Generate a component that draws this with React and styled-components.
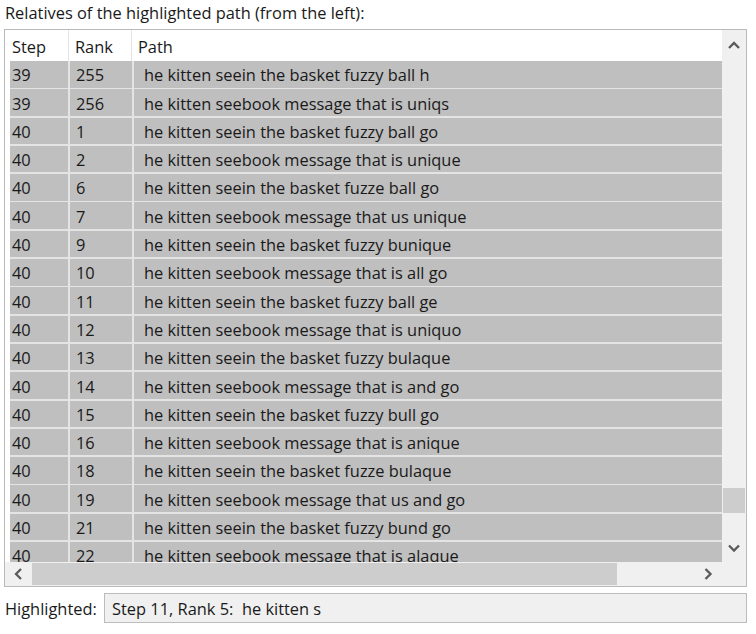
import React from "react";
import styled, { createGlobalStyle } from "styled-components";

const GlobalStyle = createGlobalStyle`
  html, body { margin: 0; padding: 0; background: #ffffff; }
  body { font-family: "Open Sans", "Noto Sans", "Liberation Sans", sans-serif; color: #1a1a1a; }
`;

const Window = styled.div`
  width: 756px;
  height: 634px;
  box-sizing: border-box;
  padding: 0 9px 0 4px;
  display: flex;
  flex-direction: column;
  font-size: 16.4px;
`;

const Title = styled.div`
  height: 29px;
  box-sizing: border-box;
  padding: 3px 0 0 1px;
  line-height: 20px;
`;

const Frame = styled.div`
  height: 558px;
  box-sizing: border-box;
  border: 1px solid #b9b9b9;
  display: grid;
  grid-template-columns: 1fr 24px;
  grid-template-rows: 1fr 24px;
`;

const Viewport = styled.div`
  overflow: hidden;
  background: #ffffff;
`;

const Header = styled.div`
  height: 31px;
  display: grid;
  grid-template-columns: 64px 63px 1fr;
`;

const HeadCell = styled.div`
  display: flex;
  align-items: center;
  padding: 2px 0 0 ${(p) => p.$pad}px;
  border-right: ${(p) => (p.$last ? "none" : "1px solid #e5e5e5")};
`;

const Rows = styled.div`
  margin-left: 5px;
  display: grid;
  grid-template-columns: 58px 62px 1fr;
  grid-auto-rows: 26.5px;
  column-gap: 2px;
  row-gap: 1.8px;
  background: #e4e4e4;
`;

const Cell = styled.div`
  background: #bfbfbf;
  display: flex;
  align-items: center;
  padding: 1px 0 0 ${(p) => p.$pad}px;
  white-space: nowrap;
  overflow: hidden;
`;

const VScroll = styled.div`
  background: #f0f0f0;
  display: flex;
  flex-direction: column;
`;

const ArrowBox = styled.div`
  display: flex;
  align-items: center;
  justify-content: center;
  flex: none;
  width: ${(p) => p.$w || "auto"};
  height: ${(p) => p.$h || "auto"};
`;

const VTrack = styled.div`
  flex: 1;
  display: flex;
  flex-direction: column;
  justify-content: flex-end;
  padding: 0 1px 21px 1px;
`;

const VThumb = styled.div`
  height: 25px;
  background: #cdcdcd;
`;

const HScroll = styled.div`
  background: #f0f0f0;
  display: flex;
  align-items: stretch;
`;

const HThumb = styled.div`
  width: 585px;
  margin: 1px 0;
  background: #cdcdcd;
`;

const Spacer = styled.div`
  flex: 1;
`;

const Corner = styled.div`
  background: #f0f0f0;
`;

const Bottom = styled.div`
  display: flex;
  align-items: center;
  margin-top: 6px;
  gap: 6px;
`;

const Label = styled.div`
  padding-left: 1px;
  width: 93px;
  white-space: nowrap;
`;

const Field = styled.div`
  flex: 1;
  height: 30px;
  box-sizing: border-box;
  border: 1px solid #bcbcbc;
  background: #f0f0f0;
  display: flex;
  align-items: center;
  padding-left: 7px;
  white-space: pre;
`;

const Chevron = ({ dir }) => {
  const paths = {
    up: "M1 7 L6 2 L11 7",
    down: "M1 1.5 L6 6.5 L11 1.5",
    left: "M7 1 L2 6 L7 11",
    right: "M1.5 1 L6.5 6 L1.5 11",
  };
  const horizontal = dir === "left" || dir === "right";
  return (
    <svg
      width={horizontal ? 9 : 12}
      height={horizontal ? 12 : 9}
      viewBox={horizontal ? "0 0 9 12" : "0 0 12 9"}
    >
      <path d={paths[dir]} fill="none" stroke="#5a5a5a" strokeWidth="2.3" />
    </svg>
  );
};

const data = [
  ["39", "255", "he kitten seein the basket fuzzy ball h"],
  ["39", "256", "he kitten seebook message that is uniqs"],
  ["40", "1", "he kitten seein the basket fuzzy ball go"],
  ["40", "2", "he kitten seebook message that is unique"],
  ["40", "6", "he kitten seein the basket fuzze ball go"],
  ["40", "7", "he kitten seebook message that us unique"],
  ["40", "9", "he kitten seein the basket fuzzy bunique"],
  ["40", "10", "he kitten seebook message that is all go"],
  ["40", "11", "he kitten seein the basket fuzzy ball ge"],
  ["40", "12", "he kitten seebook message that is uniquo"],
  ["40", "13", "he kitten seein the basket fuzzy bulaque"],
  ["40", "14", "he kitten seebook message that is and go"],
  ["40", "15", "he kitten seein the basket fuzzy bull go"],
  ["40", "16", "he kitten seebook message that is anique"],
  ["40", "18", "he kitten seein the basket fuzze bulaque"],
  ["40", "19", "he kitten seebook message that us and go"],
  ["40", "21", "he kitten seein the basket fuzzy bund go"],
  ["40", "22", "he kitten seebook message that is alaque"],
];

export default function App() {
  return (
    <>
      <GlobalStyle />
      <Window>
        <Title>Relatives of the highlighted path (from the left):</Title>
        <Frame>
          <Viewport>
            <Header>
              <HeadCell $pad={7}>Step</HeadCell>
              <HeadCell $pad={6}>Rank</HeadCell>
              <HeadCell $pad={6} $last>Path</HeadCell>
            </Header>
            <Rows>
              {data.map(([s, r, p], i) => (
                <React.Fragment key={i}>
                  <Cell $pad={2}>{s}</Cell>
                  <Cell $pad={6}>{r}</Cell>
                  <Cell $pad={10}>{p}</Cell>
                </React.Fragment>
              ))}
            </Rows>
          </Viewport>
          <VScroll>
            <ArrowBox $h="30px">
              <Chevron dir="up" />
            </ArrowBox>
            <VTrack>
              <VThumb />
            </VTrack>
            <ArrowBox $h="28px">
              <Chevron dir="down" />
            </ArrowBox>
          </VScroll>
          <HScroll>
            <ArrowBox $w="27px">
              <Chevron dir="left" />
            </ArrowBox>
            <HThumb />
            <Spacer />
            <ArrowBox $w="28px">
              <Chevron dir="right" />
            </ArrowBox>
          </HScroll>
          <Corner />
        </Frame>
        <Bottom>
          <Label>Highlighted:</Label>
          <Field>{"Step 11, Rank 5:  he kitten s"}</Field>
        </Bottom>
      </Window>
    </>
  );
}
